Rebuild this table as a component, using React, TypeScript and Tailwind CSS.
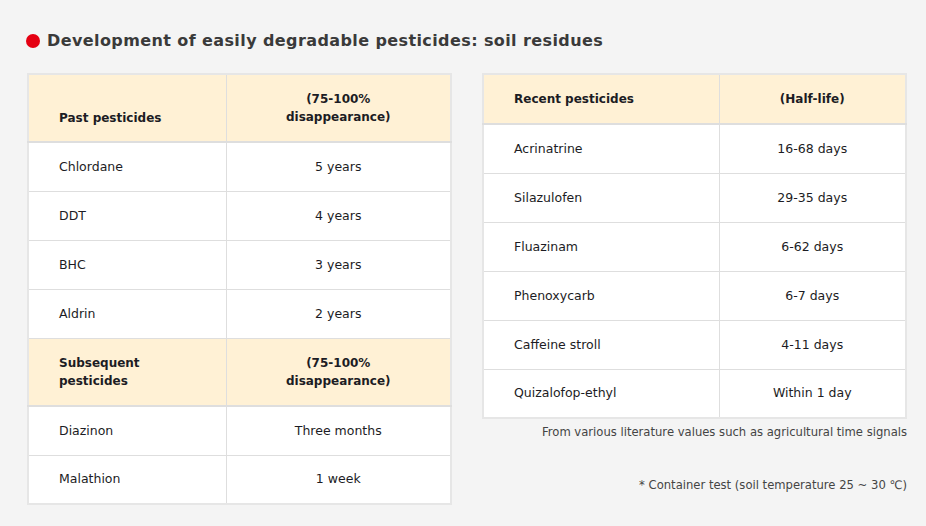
const past = [
  ['Chlordane', '5 years'],
  ['DDT', '4 years'],
  ['BHC', '3 years'],
  ['Aldrin', '2 years'],
];

const subsequent = [
  ['Diazinon', 'Three months'],
  ['Malathion', '1 week'],
];

const recent = [
  ['Acrinatrine', '16-68 days'],
  ['Silazulofen', '29-35 days'],
  ['Fluazinam', '6-62 days'],
  ['Phenoxycarb', '6-7 days'],
  ['Caffeine stroll', '4-11 days'],
  ['Quizalofop-ethyl', 'Within 1 day'],
];

function DataRow({ name, value }: { name: string; value: string }) {
  return (
    <tr className="h-[49px] bg-white">
      <td className="border border-[#dedede] pl-[30px] pr-3 align-middle">{name}</td>
      <td className="border border-[#dedede] px-3 text-center align-middle">{value}</td>
    </tr>
  );
}

export default function App() {
  return (
    <div
      className="w-[926px] h-[526px] bg-[#f4f4f4] text-[12.5px] leading-[18px] text-[#1c1c24] overflow-hidden"
      style={{ fontFamily: '"DejaVu Sans", Verdana, sans-serif' }}
    >
      <h2 className="flex items-start gap-[7px] pl-[26px] pt-[31px] h-[73px]">
        <span className="mt-[3px] w-[14px] h-[14px] rounded-full bg-[#e50012] shrink-0" />
        <span className="text-[16px] leading-[20px] font-bold tracking-[0.4px] text-[#3a3a3a]">
          Development of easily degradable pesticides: soil residues
        </span>
      </h2>

      <div className="flex gap-[30px] pl-[27px]">
        {/* Past / subsequent */}
        <table className="w-[425px] table-fixed border-collapse border-2 border-[#e6e6e6]">
          <colgroup>
            <col className="w-[198px]" />
            <col />
          </colgroup>
          <tbody>
            <tr className="h-[68px] bg-[#fff1d5] font-bold text-[12px]">
              <td className="border border-b-2 border-[#dedede] pl-[30px] pr-3 align-bottom pb-[14px]">Past pesticides</td>
              <td className="border border-b-2 border-[#dedede] px-3 text-center align-middle">
                (75-100%<br />disappearance)
              </td>
            </tr>
            {past.map(([n, v]) => (
              <DataRow key={n} name={n} value={v} />
            ))}
            <tr className="h-[68px] bg-[#fff1d5] font-bold text-[12px]">
              <td className="border border-b-2 border-[#dedede] pl-[30px] pr-3 align-middle">
                Subsequent<br />pesticides
              </td>
              <td className="border border-b-2 border-[#dedede] px-3 text-center align-middle">
                (75-100%<br />disappearance)
              </td>
            </tr>
            {subsequent.map(([n, v]) => (
              <DataRow key={n} name={n} value={v} />
            ))}
          </tbody>
        </table>

        {/* Recent */}
        <div className="w-[425px] flex flex-col">
          <table className="w-full table-fixed border-collapse border-2 border-[#e6e6e6]">
            <colgroup>
              <col className="w-[236px]" />
              <col />
            </colgroup>
            <tbody>
              <tr className="h-[50px] bg-[#fff1d5] font-bold text-[12px]">
                <td className="border border-b-2 border-[#dedede] pl-[30px] pr-3 align-middle">Recent pesticides</td>
                <td className="border border-b-2 border-[#dedede] px-3 text-center align-middle">(Half-life)</td>
              </tr>
              {recent.map(([n, v]) => (
                <DataRow key={n} name={n} value={v} />
              ))}
            </tbody>
          </table>
          <p className="mt-[4px] text-right text-[11.6px] leading-[18px] text-[#444]">
            From various literature values such as agricultural time signals
          </p>
          <p className="mt-[35px] text-right text-[11.6px] leading-[18px] text-[#444]">
            * Container test (soil temperature 25 ~ 30 ℃)
          </p>
        </div>
      </div>
    </div>
  );
}
